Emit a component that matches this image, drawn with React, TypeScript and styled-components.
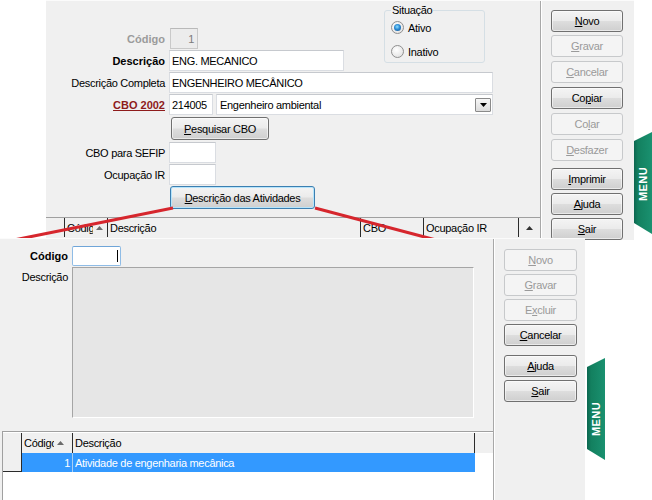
import React from 'react';
import styled, {createGlobalStyle} from 'styled-components';

const GlobalStyle = createGlobalStyle`
    html, body {
        margin: 0;
        padding: 0;
        background: #ffffff;
    }

    body {
        font-family: "Liberation Sans", Arial, sans-serif;
        font-size: 11px;
        letter-spacing: -0.3px;
        color: #000;
    }

    * {
        box-sizing: border-box;
    }
`;

type ButtonDef = {
    content: React.ReactNode;
    disabled?: boolean;
    mt: number;
}

const topButtons: ButtonDef[] = [
    {content: <><u>N</u>ovo</>, mt: 0},
    {content: <><u>G</u>ravar</>, disabled: true, mt: 3},
    {content: <><u>C</u>ancelar</>, disabled: true, mt: 4},
    {content: <>Co<u>p</u>iar</>, mt: 4},
    {content: <>Co<u>l</u>ar</>, disabled: true, mt: 4},
    {content: <><u>D</u>esfazer</>, disabled: true, mt: 4},
    {content: <><u>I</u>mprimir</>, mt: 7},
    {content: <><u>A</u>juda</>, mt: 3},
    {content: <><u>S</u>air</>, mt: 3},
];

const bottomButtons: ButtonDef[] = [
    {content: <><u>N</u>ovo</>, disabled: true, mt: 0},
    {content: <><u>G</u>ravar</>, disabled: true, mt: 3},
    {content: <>E<u>x</u>cluir</>, disabled: true, mt: 3},
    {content: <><u>C</u>ancelar</>, mt: 3},
    {content: <><u>A</u>juda</>, mt: 9},
    {content: <><u>S</u>air</>, mt: 3},
];

const SortArrow = () => (
    <svg width="7" height="4" viewBox="0 0 7 4">
        <path d="M0 4 L3.5 0 L7 4 Z" fill="#6b6b6b"/>
    </svg>
);

const MenuTab = ({top, left, shift}: { top: number; left: string; shift: number }) => (
    <Tab $top={top} $left={left}>
        <svg width="18" height="102" viewBox="0 0 18 102">
            <defs>
                <linearGradient id={`tabg${top}`} x1="0" x2="1" y1="0" y2="0">
                    <stop offset="0" stopColor="#0c6650"/>
                    <stop offset="0.22" stopColor="#13805f"/>
                    <stop offset="1" stopColor="#1a9170"/>
                </linearGradient>
            </defs>
            <polygon points="0,9 18,0 18,102 0,91" fill={`url(#tabg${top})`}/>
        </svg>
        <TabText $shift={shift}>MENU</TabText>
    </Tab>
);

export default function App() {
    return (
        <>
            <GlobalStyle/>
            <Stage>
                <Window $left={46} $top={0} $w={588} $h={240} $z={1}>
                    <TopMain>
                        <TopForm>
                            <Spacer/>
                            <GroupBox>
                                <legend>Situação</legend>
                                <RadioRow>
                                    <Radio $checked/>
                                    <span>Ativo</span>
                                </RadioRow>
                                <RadioRow>
                                    <Radio/>
                                    <span>Inativo</span>
                                </RadioRow>
                            </GroupBox>

                            <Label $tone="muted">Código</Label>
                            <Field>
                                <TextBox $w={28} $disabled $right style={{marginLeft: 1}}>1</TextBox>
                            </Field>

                            <Label $tone="bold">Descrição</Label>
                            <Field>
                                <TextBox $w={175}>ENG. MECANICO</TextBox>
                            </Field>

                            <Label>Descrição Completa</Label>
                            <Field $wide>
                                <TextBox>ENGENHEIRO MECÂNICO</TextBox>
                            </Field>

                            <Label $tone="link">CBO 2002</Label>
                            <Field $wide>
                                <TextBox $w={44}>214005</TextBox>
                                <Select>
                                    <span>Engenheiro ambiental</span>
                                    <DropArrow>
                                        <svg width="7" height="4" viewBox="0 0 7 4">
                                            <path d="M0 0 L7 0 L3.5 4 Z" fill="#000"/>
                                        </svg>
                                    </DropArrow>
                                </Select>
                            </Field>

                            <Field $wide>
                                <Button $w={98} $h={23} $ml={2} $my={1}><u>P</u>esquisar CBO</Button>
                            </Field>

                            <Label>CBO para SEFIP</Label>
                            <Field>
                                <TextBox $w={47}/>
                            </Field>

                            <Label>Ocupação IR</Label>
                            <Field>
                                <TextBox $w={47}/>
                            </Field>

                            <Field $wide>
                                <Button $w={145} $h={23} $ml={1} $focused><u>D</u>escrição das Atividades</Button>
                            </Field>
                        </TopForm>

                        <GridHeader $top>
                            <HeadCell $w={19}/>
                            <HeadCell $w={43}>
                                <Clip $w={26}>Código</Clip>
                                <SortArrow/>
                            </HeadCell>
                            <HeadCell $w={253}>Descrição</HeadCell>
                            <HeadCell $w={63}>CBO</HeadCell>
                            <HeadCell $w={95}>Ocupação IR</HeadCell>
                            <ScrollCell>
                                <svg width="7" height="4" viewBox="0 0 7 4">
                                    <path d="M0 4 L3.5 0 L7 4 Z" fill="#333"/>
                                </svg>
                            </ScrollCell>
                        </GridHeader>
                    </TopMain>

                    <ButtonColumn $w={94} $pt={9}>
                        {topButtons.map((b, i) => (
                            <Button key={i} $w={72} $h={22} $my={0} $mt={b.mt} $disabled={b.disabled}>
                                {b.content}
                            </Button>
                        ))}
                    </ButtonColumn>

                    <MenuTab top={131} left="100%" shift={1}/>
                </Window>

                <Lines width="652" height="500" viewBox="0 0 652 500">
                    <line x1="173" y1="208" x2="4" y2="242" stroke="#d6262d" strokeWidth="3"/>
                    <line x1="315" y1="208" x2="436" y2="240" stroke="#d6262d" strokeWidth="3"/>
                </Lines>

                <Window $left={0} $top={238} $w={585} $h={262} $z={3}>
                    <BottomMain>
                        <BottomForm>
                            <Label $tone="bold">Código</Label>
                            <Field>
                                <TextBox $w={49} $h={20} $focused>
                                    <Caret/>
                                </TextBox>
                            </Field>

                            <Label $top>Descrição</Label>
                            <Memo/>
                        </BottomForm>

                        <DataGrid>
                            <GridHeader>
                                <HeadCell $w={19}/>
                                <HeadCell $w={51}>
                                    <Clip $w={30}>Código</Clip>
                                    <SortArrow/>
                                </HeadCell>
                                <HeadCell $w={402}>Descrição</HeadCell>
                            </GridHeader>
                            <GridRow>
                                <IndicatorCell/>
                                <RowCell $w={51} $right>1</RowCell>
                                <RowCell $w={402}>Atividade de engenharia mecânica</RowCell>
                            </GridRow>
                        </DataGrid>
                    </BottomMain>

                    <ButtonColumn $w={92} $pt={10}>
                        {bottomButtons.map((b, i) => (
                            <Button key={i} $w={73} $h={22} $my={0} $mt={b.mt} $disabled={b.disabled}>
                                {b.content}
                            </Button>
                        ))}
                    </ButtonColumn>

                    <MenuTab top={119} left="calc(100% + 2px)" shift={10}/>
                </Window>
            </Stage>
        </>
    );
}

const Stage = styled.div`
    position: relative;
    width: 652px;
    height: 500px;
    overflow: hidden;
    background: #ffffff;
`;

const Window = styled.div<{ $left: number; $top: number; $w: number; $h: number; $z: number }>`
    position: absolute;
    left: ${p => p.$left}px;
    top: ${p => p.$top}px;
    width: ${p => p.$w}px;
    height: ${p => p.$h}px;
    z-index: ${p => p.$z};
    display: flex;
    background: #f0f0f0;
    border-top: 1px solid #fbfbfb;
`;

const Lines = styled.svg`
    position: absolute;
    left: 0;
    top: 0;
    z-index: 2;
    pointer-events: none;
`;

const TopMain = styled.div`
    width: 494px;
    display: flex;
    flex-direction: column;
    padding-top: 9px;
`;

const TopForm = styled.div`
    display: grid;
    grid-template-columns: 123px 215px 101px 8px;
    grid-template-rows: 17px;
    grid-auto-rows: auto;
    row-gap: 1px;
`;

const Spacer = styled.div`
    grid-column: 1 / 3;
`;

const Label = styled.div<{ $tone?: 'normal' | 'bold' | 'muted' | 'link'; $top?: boolean }>`
    grid-column: 1;
    display: flex;
    align-items: ${p => p.$top ? 'flex-start' : 'center'};
    justify-content: flex-end;
    padding-right: 4px;
    padding-top: ${p => p.$top ? '4px' : '0'};
    white-space: nowrap;
    font-weight: ${p => p.$tone && p.$tone !== 'normal' ? 700 : 400};
    letter-spacing: ${p => p.$tone && p.$tone !== 'normal' ? '0' : '-0.3px'};
    color: ${p => p.$tone === 'muted' ? '#9b9b9b' : p.$tone === 'link' ? '#8e1b1b' : '#000'};
    text-decoration: ${p => p.$tone === 'link' ? 'underline' : 'none'};
`;

const Field = styled.div<{ $wide?: boolean }>`
    grid-column: ${p => p.$wide ? '2 / 5' : '2 / 3'};
    display: flex;
    align-items: center;
    gap: 2px;
`;

const TextBox = styled.div<{ $w?: number; $h?: number; $disabled?: boolean; $right?: boolean; $focused?: boolean }>`
    position: relative;
    width: ${p => p.$w ? `${p.$w}px` : '100%'};
    height: ${p => p.$h ?? 21}px;
    flex: none;
    display: flex;
    align-items: center;
    justify-content: ${p => p.$right ? 'flex-end' : 'flex-start'};
    padding: 0 3px 0 2px;
    background: ${p => p.$disabled ? '#ececec' : '#ffffff'};
    color: ${p => p.$disabled ? '#7b7b7b' : '#000'};
    border: 1px solid ${p => p.$focused ? '#8fbce6' : p.$disabled ? '#c9c9c9' : '#dadde2'};
    border-top-color: ${p => p.$focused ? '#6fa5d8' : p.$disabled ? '#b9b9b9' : '#c6c9ce'};
    border-radius: ${p => p.$focused ? '2px' : '0'};
    white-space: nowrap;
`;

const Caret = styled.span`
    position: absolute;
    right: 2px;
    top: 3px;
    width: 1px;
    height: 12px;
    background: #000;
`;

const Select = styled.div`
    flex: 1;
    height: 21px;
    margin-left: 1px;
    display: flex;
    align-items: center;
    justify-content: space-between;
    padding: 0 1px 0 3px;
    background: #ffffff;
    border: 1px solid #dadde2;
    border-top-color: #c6c9ce;
`;

const DropArrow = styled.div`
    width: 16px;
    height: 14px;
    display: flex;
    align-items: center;
    justify-content: center;
    border: 1px solid #8a8a8a;
    border-radius: 1px;
    background: linear-gradient(#f7f7f7, #dcdcdc);
`;

const GroupBox = styled.fieldset`
    grid-column: 3;
    grid-row: 1 / span 3;
    align-self: start;
    height: 59px;
    margin: -6px 0 0 0;
    padding: 4px 0 0 6px;
    border: 1px solid #d5dfe5;
    border-radius: 3px;
    display: flex;
    flex-direction: column;
    gap: 9px;

    legend {
        padding: 0 1px;
        margin-left: 0;
        line-height: 13px;
    }
`;

const RadioRow = styled.div`
    display: flex;
    align-items: center;
    gap: 4px;
    height: 13px;

    & + & {
        margin-top: 2px;
    }
`;

const Radio = styled.span<{ $checked?: boolean }>`
    width: 13px;
    height: 13px;
    border-radius: 50%;
    border: 1px solid #8f8f8f;
    background: radial-gradient(circle at 40% 35%, #ffffff, #dcdcdc);
    position: relative;

    &::after {
        content: '';
        display: ${p => p.$checked ? 'block' : 'none'};
        position: absolute;
        left: 2px;
        top: 2px;
        width: 7px;
        height: 7px;
        border-radius: 50%;
        background: radial-gradient(circle at 45% 40%, #8fe0ff 0%, #2a8ad4 45%, #174f86 100%);
    }
`;

const Button = styled.div<{ $w: number; $h: number; $ml?: number; $my?: number; $mt?: number; $disabled?: boolean; $focused?: boolean }>`
    width: ${p => p.$w}px;
    height: ${p => p.$h}px;
    flex: none;
    margin-left: ${p => p.$ml ?? 0}px;
    margin-top: ${p => p.$mt ?? p.$my ?? 0}px;
    margin-bottom: ${p => p.$my ?? 0}px;
    display: flex;
    align-items: center;
    justify-content: center;
    white-space: nowrap;
    border-radius: 3px;
    border: 1px solid ${p => p.$focused ? '#3c7fb1' : p.$disabled ? '#c7c9cb' : '#707070'};
    background: ${p => p.$disabled
        ? '#f4f4f4'
        : 'linear-gradient(#f4f4f4 0%, #ebebeb 48%, #dddddd 52%, #cfcfcf 100%)'};
    box-shadow: ${p => p.$focused
        ? 'inset 0 0 0 1px #b6e4fb'
        : p.$disabled ? 'none' : 'inset 0 0 0 1px rgba(255,255,255,0.55)'};
    color: ${p => p.$disabled ? '#9a9a9a' : '#000'};
`;

const ButtonColumn = styled.div<{ $w: number; $pt: number }>`
    width: ${p => p.$w}px;
    display: flex;
    flex-direction: column;
    padding: ${p => p.$pt}px 0 0 10px;
    border-left: 1px solid #a8a8a8;
    box-shadow: inset 1px 0 0 #ffffff;
    background: #f0f0f0;
`;

const GridHeader = styled.div<{ $top?: boolean }>`
    display: flex;
    height: 20px;
    margin-top: ${p => p.$top ? '8px' : '0'};
    border-top: ${p => p.$top ? '1px solid #a0a0a0' : 'none'};
    background: #f0f0f0;
`;

const HeadCell = styled.div<{ $w: number }>`
    width: ${p => p.$w}px;
    flex: none;
    display: flex;
    align-items: center;
    gap: 3px;
    padding-left: 2px;
    white-space: nowrap;
    overflow: hidden;
    border-right: 1px solid #2b2b2b;
    background: #f0f0f0;
`;

const Clip = styled.span<{ $w: number }>`
    display: inline-block;
    width: ${p => p.$w}px;
    overflow: hidden;
    white-space: nowrap;
`;

const ScrollCell = styled.div`
    width: 21px;
    flex: none;
    display: flex;
    align-items: center;
    justify-content: center;
`;

const BottomMain = styled.div`
    width: 493px;
    display: flex;
    flex-direction: column;
    padding-top: 7px;
`;

const BottomForm = styled.div`
    display: grid;
    grid-template-columns: 72px 402px;
    row-gap: 1px;
`;

const Memo = styled.div`
    grid-column: 2;
    height: 151px;
    background: #e6e6e6;
    border: 1px solid #ffffff;
    border-top-color: #a5a5a5;
    border-left-color: #a5a5a5;
`;

const DataGrid = styled.div`
    flex: 1;
    margin: 13px 0 0 2px;
    background: #ffffff;
    border-top: 1px solid #a0a0a0;
    border-left: 1px solid #a0a0a0;
    padding-top: 1px;
`;

const GridRow = styled.div`
    display: flex;
    height: 19px;
`;

const IndicatorCell = styled.div`
    width: 19px;
    flex: none;
    background: #f0f0f0;
    border-right: 1px solid #2b2b2b;
    border-bottom: 1px solid #2b2b2b;
`;

const RowCell = styled.div<{ $w: number; $right?: boolean }>`
    width: ${p => p.$w}px;
    flex: none;
    display: flex;
    align-items: center;
    justify-content: ${p => p.$right ? 'flex-end' : 'flex-start'};
    padding: 0 2px 0 2px;
    background: #3399ff;
    color: #ffffff;
    white-space: nowrap;
    border-right: 1px solid ${p => p.$right ? '#a7cff5' : '#3399ff'};
`;

const Tab = styled.div<{ $top: number; $left: string }>`
    position: absolute;
    top: ${p => p.$top}px;
    left: ${p => p.$left};
    width: 18px;
    height: 102px;

    svg {
        display: block;
    }
`;

const TabText = styled.span<{ $shift: number }>`
    position: absolute;
    left: 0;
    top: ${p => 51 + p.$shift}px;
    width: 18px;
    transform: translateY(-50%) rotate(180deg);
    writing-mode: vertical-rl;
    display: flex;
    align-items: center;
    justify-content: center;
    color: #ffffff;
    font-weight: 700;
    font-size: 11px;
    letter-spacing: 0.4px;
`;
